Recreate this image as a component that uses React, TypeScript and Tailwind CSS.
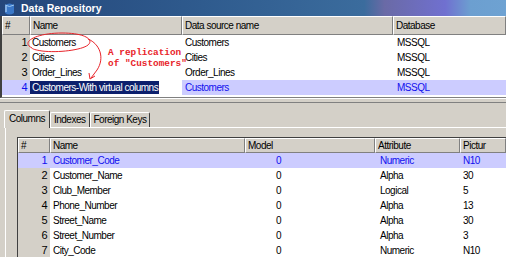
import React from "react"

const topRows = [
  { n: 1, name: "Customers", ds: "Customers", db: "MSSQL" },
  { n: 2, name: "Cities", ds: "Cities", db: "MSSQL" },
  { n: 3, name: "Order_Lines", ds: "Order_Lines", db: "MSSQL" },
]

const columns = [
  { n: 1, name: "Customer_Code", model: "0", attr: "Numeric", pic: "N10" },
  { n: 2, name: "Customer_Name", model: "0", attr: "Alpha", pic: "30" },
  { n: 3, name: "Club_Member", model: "0", attr: "Logical", pic: "5" },
  { n: 4, name: "Phone_Number", model: "0", attr: "Alpha", pic: "13" },
  { n: 5, name: "Street_Name", model: "0", attr: "Alpha", pic: "30" },
  { n: 6, name: "Street_Number", model: "0", attr: "Alpha", pic: "3" },
  { n: 7, name: "City_Code", model: "0", attr: "Numeric", pic: "N10" },
]

// classic raised header cell
const hdr =
  "h-full flex items-center pl-[2px] bg-[#d4d0c8] border-t border-l border-t-white border-l-white border-r border-b border-r-[#808080] border-b-[#808080] whitespace-nowrap overflow-hidden"

const tab =
  "h-[15px] px-[3px] flex items-center border-t border-l border-t-white border-l-white border-r border-r-[#404040] rounded-t-[2px]"

function DbIcon() {
  return (
    <svg width="11" height="13" viewBox="0 0 11 13">
      <path d="M1 3 Q5.5 0 10 3 L10 11 Q5.5 14 1 11 Z" fill="#3a78c8" />
      <path d="M1 3 Q5.5 6 10 3" stroke="#9cc8f0" strokeWidth="1" fill="none" />
      <path d="M2 4 L2 10" stroke="#bfe0ff" strokeWidth="1" />
    </svg>
  )
}

export default function App() {
  return (
    <div className="w-[506px] h-[257px] overflow-hidden bg-[#d4d0c8] text-[10px] tracking-[-0.5px] text-black font-['Liberation_Sans',Arial,sans-serif] leading-none select-none">
      {/* title bar */}
      <div className="h-[16px] flex items-center gap-[6px] pl-[4px] bg-[linear-gradient(90deg,#24467a_0%,#2f5b8e_40%,#3b6c9d_72%,#6a6aa6_76%,#7070d0_88%,#6c9fd0_93%,#6ea2d2_100%)]">
        <DbIcon />
        <span className="text-white font-bold text-[10.5px] tracking-normal">Data Repository</span>
      </div>

      {/* top grid */}
      <div className="relative h-[82px] bg-white border-l-2 border-l-[#404040] border-b border-b-[#808080]">
        <div className="grid grid-cols-[28px_152px_211px_1fr] h-[19px]">
          <div className={hdr}>#</div>
          <div className={hdr}>Name</div>
          <div className={hdr}>Data source name</div>
          <div className={hdr}>Database</div>
        </div>
        {topRows.map((r) => (
          <div key={r.n} className="grid grid-cols-[28px_152px_211px_1fr] h-[15px] items-center">
            <div className="h-full bg-[#d4d0c8] flex items-center justify-end pr-[3px] text-[11px]">{r.n}</div>
            <div className="pl-[2px]">{r.name}</div>
            <div className="pl-[3px]">{r.ds}</div>
            <div className="pl-[4px]">{r.db}</div>
          </div>
        ))}
        <div className="grid grid-cols-[28px_152px_211px_1fr] h-[15px] items-center bg-[#ccccff] text-[#1010ee]">
          <div className="h-full flex items-center justify-end pr-[3px] text-[11px]">4</div>
          <div className="h-full flex items-center bg-white">
            <span className="h-[13px] flex items-center bg-[#0c1f6c] text-white pl-[2px] pr-[1px] whitespace-nowrap">
              Customers-With virtual columns
            </span>
          </div>
          <div className="pl-[3px]">Customers</div>
          <div className="pl-[4px]">MSSQL</div>
        </div>

        {/* annotation */}
        <svg className="absolute left-0 top-0 pointer-events-none" width="200" height="82" viewBox="0 16 200 82">
          <path
            d="M30 48 C18 42 34 33 60 33 C84 33 92 40 86 45 C80 50 56 53 40 51 C34 50 30 49 30 48"
            stroke="#e8242a"
            strokeWidth="1"
            fill="none"
          />
          <path d="M86 39 C98 44 103 58 95 70 C93 73 91 75 89 78" stroke="#e8242a" strokeWidth="1" fill="none" />
          <path d="M88 79 L87 73 M88 79 L93 76" stroke="#e8242a" strokeWidth="1" fill="none" />
        </svg>
        <div className="absolute left-[106px] top-[31px] text-[#e8242a] text-[9.4px] tracking-normal leading-[11px] font-['Liberation_Mono',monospace] font-bold whitespace-pre">
          {"A replication\nof \"Customers\""}
        </div>
      </div>

      {/* splitter */}
      <div className="h-[5px] border-t border-t-white border-b border-b-[#808080] bg-[#d4d0c8]" />

      {/* tabs */}
      <div className="pl-[4px] pt-[6px] flex items-end h-[24px]">
        <div className="h-[18px] px-[4px] flex items-center bg-[#d4d0c8] border-t border-l border-t-white border-l-white border-r border-r-[#404040] rounded-t-[2px] relative z-10 -mb-px pb-[1px]">
          Columns
        </div>
        <div className={tab}>Indexes</div>
        <div className={tab}>Foreign Keys</div>
      </div>

      {/* tab panel */}
      <div className="ml-[5px] border-t border-l border-t-white border-l-white pl-[11px] pt-[9px] h-[140px]">
        <div className="border-t border-l border-t-[#404040] border-l-[#404040] bg-white h-full">
          <div className="grid grid-cols-[32px_195px_130px_85px_1fr] h-[15px]">
            <div className={hdr}>#</div>
            <div className={hdr}>Name</div>
            <div className={hdr}>Model</div>
            <div className={hdr}>Attribute</div>
            <div className={hdr}>Pictur</div>
          </div>
          {columns.map((c) => (
            <div
              key={c.n}
              className={
                "grid grid-cols-[32px_195px_130px_85px_1fr] h-[15px] items-center " +
                (c.n === 1 ? "bg-[#ccccff] text-[#1010ee]" : "")
              }
            >
              <div className={"h-full flex items-center justify-end pr-[3px] text-[11px] " + (c.n === 1 ? "" : "bg-[#d4d0c8]")}>
                {c.n}
              </div>
              <div className="pl-[3px]">{c.name}</div>
              <div className="pl-[31px]">{c.model}</div>
              <div className="pl-[5px]">{c.attr}</div>
              <div className="pl-[3px]">{c.pic}</div>
            </div>
          ))}
        </div>
      </div>
    </div>
  )
}
